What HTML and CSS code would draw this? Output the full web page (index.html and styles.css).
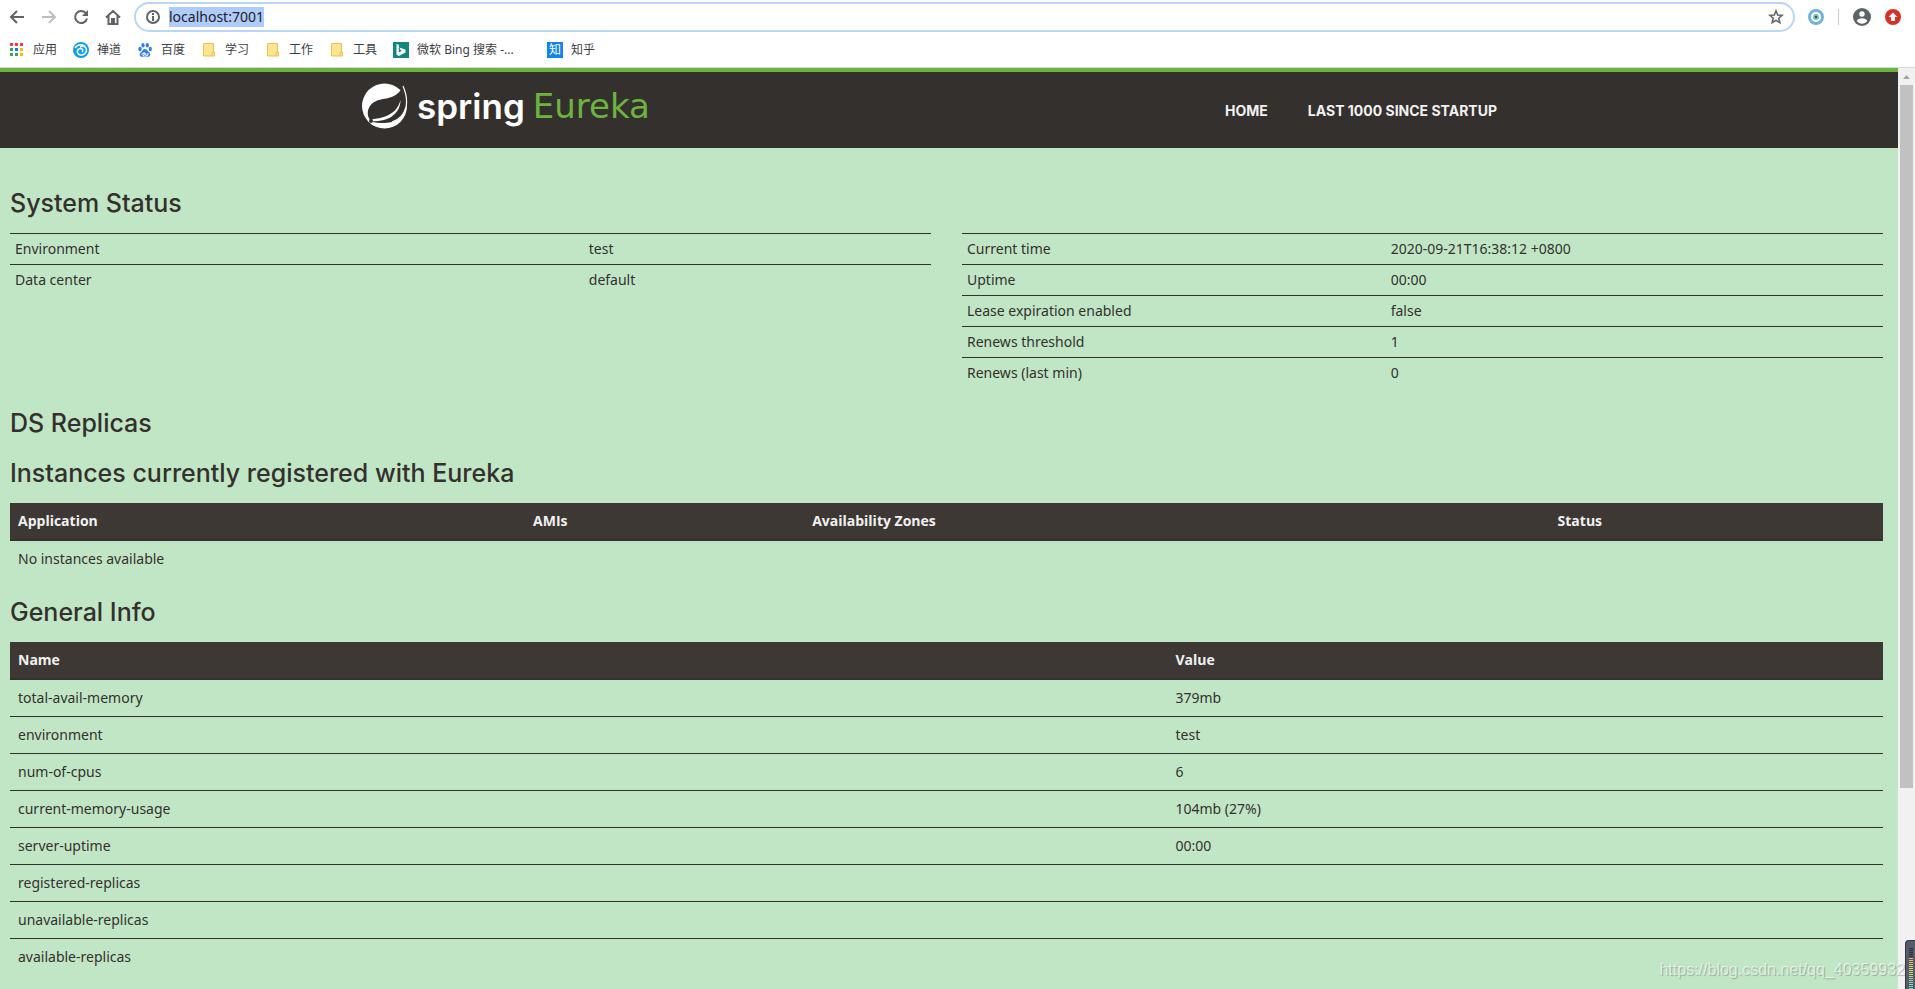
FILE: index.html
```html
<!DOCTYPE html>
<html lang="zh-CN">
<head>
<meta charset="utf-8">
<title>Eureka</title>
<link rel="stylesheet" href="styles.css">
</head>
<body>
<div class="toolbar">
  <div class="nav-buttons">
    <button class="icon-btn" aria-label="Back"><svg viewBox="0 0 16 16"><path d="M15 8H2M8 2L2 8l6 6" fill="none" stroke="#5f6368" stroke-width="2"/></svg></button>
    <button class="icon-btn" aria-label="Forward"><svg viewBox="0 0 16 16"><path d="M1 8h13M8 2l6 6-6 6" fill="none" stroke="#bdbfc1" stroke-width="2"/></svg></button>
    <button class="icon-btn" aria-label="Reload"><svg viewBox="0 0 16 16"><path d="M13 4.500A6 6 0 1 0 14 9.500" fill="none" stroke="#5f6368" stroke-width="2"/><path d="M15 1v6H9z" fill="#5f6368"/></svg></button>
    <button class="icon-btn" aria-label="Home"><svg viewBox="0 0 16 16"><path d="M1 8.500L8 2l7 6.500M3.500 7v8h3.500v-5h2v5h3.500V7" fill="none" stroke="#5f6368" stroke-width="2"/></svg></button>
  </div>
  <div class="omnibox">
    <svg class="info" viewBox="0 0 16 16"><circle cx="8" cy="8" r="6" fill="none" stroke="#5f6368" stroke-width="2"/><path d="M8 7v5M8 4v2" stroke="#5f6368" stroke-width="2"/></svg>
    <input class="url" type="text" aria-label="Address" value="localhost:7001">
    <button class="icon-btn star" aria-label="Bookmark"><svg viewBox="0 0 16 16"><path d="M8 1.800l1.700 4.200 4.500.3-3.500 2.900 1.200 4.500L8 11.300l-3.900 2.400 1.200-4.500L1.800 6.300l4.500-.3z" fill="none" stroke="#5f6368" stroke-width="1.500"/></svg></button>
  </div>
  <div class="extensions">
    <button class="icon-btn" aria-label="Extension"><svg viewBox="0 0 16 16"><circle cx="8" cy="8" r="6.500" fill="#fff" stroke="#72b3d6" stroke-width="3"/><circle cx="8" cy="8" r="3" fill="#71c3b1"/><circle cx="8" cy="8" r="1.200" fill="#35506b"/></svg></button>
    <span class="divider"></span>
    <button class="icon-btn avatar" aria-label="Profile"><svg viewBox="0 0 18 18"><circle cx="9" cy="9" r="9" fill="#5f6368"/><circle cx="9" cy="6" r="2.700" fill="#fff"/><path d="M3.800 13c1-3.600 9.400-3.600 10.400 0-2.500 3.500-7.900 3.500-10.400 0z" fill="#fff"/></svg></button>
    <button class="icon-btn" aria-label="Update"><svg viewBox="0 0 16 16"><circle cx="8" cy="8" r="8" fill="#d93025"/><path d="M8 3.500l4.300 4.500H10v4H6V8H3.700z" fill="#fff"/></svg></button>
  </div>
</div>
<nav class="bookmarks">
  <a href="#"><svg viewBox="0 0 16 16"><path d="M1 1h3v3H1zM6 1h3v3H6zM11 1h3v3h-3z" fill="#ea4335"/><path d="M1 6h3v3H1zM1 11h3v3H1zM6 11h3v3H6z" fill="#34a853"/><path d="M6 6h3v3H6z" fill="#1a73e8"/><path d="M11 6h3v3h-3zM11 11h3v3h-3z" fill="#fbbc04"/></svg>应用</a>
  <a href="#"><svg viewBox="0 0 16 16"><circle cx="8" cy="8" r="8" fill="#0a9bf2"/><path d="M2 6c3-4.500 9-4 11 0 2 4.500-3 8.500-7 6.500-3-2-1.500-6 1.500-6 2.500 0 3.200 2.600 1.300 3.500M13 6c-2-2-4-2-6-1" fill="none" stroke="#fff" stroke-width="1.500"/></svg>禅道</a>
  <a href="#"><svg viewBox="0 0 16 16"><g fill="#2f7cf0"><ellipse cx="3" cy="7" rx="1.700" ry="2.200"/><ellipse cx="6" cy="3.300" rx="1.600" ry="2.300"/><ellipse cx="10.300" cy="3.300" rx="1.600" ry="2.300"/><ellipse cx="13.300" cy="7" rx="1.600" ry="2.200"/><path d="M8 7c2 0 2.500 2 4.300 3.500 2 2 .7 4.500-1.800 4.300-1.700-.3-3.300-.3-5 0-2.500.2-3.800-2.300-1.800-4.300C5.500 9 6 7 8 7z"/></g><path d="M7.200 10v3.300H5.500c-1-.5-.7-2 .3-2h1.400M8.700 11v2.300h2.200V11" fill="none" stroke="#fff"/></svg>百度</a>
  <a href="#"><svg viewBox="0 0 16 16"><path d="M2.500 1.500h10v9h1v3.500h-11z" fill="#ffe48f" stroke="#e8c24d"/><path d="M11 14v-3.500h2.500" fill="none" stroke="#e8c24d"/></svg>学习</a>
  <a href="#"><svg viewBox="0 0 16 16"><path d="M2.500 1.500h10v9h1v3.500h-11z" fill="#ffe48f" stroke="#e8c24d"/><path d="M11 14v-3.500h2.500" fill="none" stroke="#e8c24d"/></svg>工作</a>
  <a href="#"><svg viewBox="0 0 16 16"><path d="M2.500 1.500h10v9h1v3.500h-11z" fill="#ffe48f" stroke="#e8c24d"/><path d="M11 14v-3.500h2.500" fill="none" stroke="#e8c24d"/></svg>工具</a>
  <a class="wide" href="#"><svg viewBox="0 0 16 16"><path d="M0 0h16v16H0z" fill="#11867f"/><path d="M3.500 2l2.300.8v7.700L9 8.700 7.500 8l-1-2.400L12.500 7.700v2.700L5.800 14l-2.300-1.300z" fill="#fff"/></svg>微软 Bing 搜索 -...</a>
  <a href="#"><span class="zhihu">知</span>知乎</a>
</nav>
<div class="viewport">
  <div class="page">
    <header class="navbar">
      <div class="navbar-inner">
        <a class="brand" href="#">
          <svg viewBox="0 0 46 46"><circle cx="22.500" cy="23" r="22.500" fill="#fff"/><path d="M41 3c3 7 4.500 14 3 21-2 8-7 13-14 15-7 1.500-14 1-20 0-5-4-5.500-11-2-16 3-4 7-6 13-7 9-1 16-4 20-13z" fill="#34302d"/><path d="M38.500 17c-2 8-7 13-14 16-5 2-10 2.500-15 3.500v2c9-.5 17-1.500 22-6.500 5-4 7-9.500 7-15z" fill="#fff"/><path d="M41 3c3 7 4.500 14 3 21-2 8-7 13-14 15" fill="none" stroke="#fff" stroke-width="1.200"/><circle cx="9" cy="38" r="2" fill="#34302d"/></svg>
          <span class="spring">spring</span><span class="eureka">Eureka</span>
        </a>
        <nav class="menu"><a href="#">HOME</a><a href="#">LAST 1000 SINCE STARTUP</a></nav>
      </div>
    </header>
    <main class="content">
      <h1>System Status</h1>
      <div class="status">
        <table class="compact env">
          <tr><td>Environment</td><td>test</td></tr>
          <tr><td>Data center</td><td>default</td></tr>
        </table>
        <table class="compact runtime">
          <tr><td>Current time</td><td>2020-09-21T16:38:12 +0800</td></tr>
          <tr><td>Uptime</td><td>00:00</td></tr>
          <tr><td>Lease expiration enabled</td><td>false</td></tr>
          <tr><td>Renews threshold</td><td>1</td></tr>
          <tr><td>Renews (last min)</td><td>0</td></tr>
        </table>
      </div>
      <h1>DS Replicas</h1>
      <h1>Instances currently registered with Eureka</h1>
      <table class="striped instances">
        <thead><tr><th>Application</th><th>AMIs</th><th>Availability Zones</th><th>Status</th></tr></thead>
        <tbody><tr><td colspan="4">No instances available</td></tr></tbody>
      </table>
      <h1>General Info</h1>
      <table class="striped general">
        <thead><tr><th>Name</th><th>Value</th></tr></thead>
        <tbody>
          <tr><td>total-avail-memory</td><td>379mb</td></tr>
          <tr><td>environment</td><td>test</td></tr>
          <tr><td>num-of-cpus</td><td>6</td></tr>
          <tr><td>current-memory-usage</td><td>104mb (27%)</td></tr>
          <tr><td>server-uptime</td><td>00:00</td></tr>
          <tr><td>registered-replicas</td><td></td></tr>
          <tr><td>unavailable-replicas</td><td></td></tr>
          <tr><td>available-replicas</td><td></td></tr>
        </tbody>
      </table>
    </main>
  </div>
  <div class="scrollbar">
    <svg viewBox="0 0 17 17"><path d="M5 11l3.500-4L12 11z" fill="#a3a3a3"/></svg>
    <div class="thumb"></div>
  </div>
  <div class="watermark">https://blog.csdn.net/qq_40359932</div>
  <div class="meter"><div class="bars"></div></div>
</div>
</body>
</html>
```
FILE: styles.css
```css
* { box-sizing: border-box; }
body {
  margin: 0;
  height: 100vh;
  display: flex;
  flex-direction: column;
  overflow: hidden;
  background: #fff;
  font-family: "Noto Sans", "Noto Sans CJK SC", sans-serif;
  font-size: 14px;
  line-height: 20px;
  color: #34302d;
}
a { color: inherit; text-decoration: none; }
svg { display: block; flex: none; }

/* Browser chrome */
.toolbar { display: flex; align-items: center; padding: 2px 14px 0 9px; }
.nav-buttons { display: flex; gap: 16px; margin-right: 13px; }
.icon-btn { display: block; width: 16px; height: 16px; padding: 0; border: 0; background: none; }
.icon-btn svg { width: 100%; height: 100%; }
.omnibox {
  flex: 1;
  display: flex;
  align-items: center;
  height: 30px;
  padding: 0 9px;
  border: 2px solid #b9d5f8;
  border-radius: 15px;
}
.info { width: 16px; height: 16px; margin-right: 8px; }
.url {
  field-sizing: content;
  height: 20px;
  padding: 0;
  border: 0;
  outline: 0;
  background: #aecbfa;
  font: 14px/20px "Noto Sans", sans-serif;
  color: #202124;
}
.star { margin-left: auto; }
.extensions { display: flex; align-items: center; gap: 14px; margin-left: 13px; }
.divider { width: 1px; height: 16px; background: #c8cacd; }
.icon-btn.avatar { width: 18px; height: 18px; }
.bookmarks {
  display: flex;
  gap: 16px;
  height: 36px;
  padding: 0 9px;
  border-bottom: 1px solid #d8dadd;
  font-size: 12px;
  color: #3c4043;
}
.bookmarks a { display: flex; align-items: center; gap: 8px; white-space: nowrap; }
.bookmarks svg { width: 16px; height: 16px; }
.bookmarks .wide { width: 138px; }
.zhihu { width: 16px; height: 16px; background: #1283ea; color: #fff; line-height: 16px; text-align: center; }

/* Page area */
.viewport { position: relative; flex: 1; min-height: 0; display: flex; }
.page { flex: 1; overflow: hidden; background: #c1e6c6; }
.navbar { height: 80px; border-top: 4px solid #6db33f; background: #34302d; }
.navbar-inner {
  display: flex;
  justify-content: space-between;
  max-width: 1174px;
  height: 68px;
  margin: 0 auto;
}
.brand { display: flex; align-items: center; font-family: Inter, sans-serif; font-size: 35px; line-height: 40px; }
.brand svg { width: 46px; height: 46px; margin-right: 9px; }
.spring { margin-right: 8px; color: #fff; font-weight: 600; }
.eureka { color: #6db33f; font-family: "DejaVu Sans", sans-serif; font-size: 34px; }
.menu { display: flex; gap: 40px; align-items: center; padding: 9px 39px 0 0; font-family: Inter, sans-serif; font-weight: 700; color: #f1f1f1; }
.content { padding: 42px 15px 0 10px; }
h1 { margin: 22px 0 17px; font: 500 25px/26px Inter, sans-serif; }
h1:first-child { margin-top: 0; }
h1 + h1 { margin-top: 24px; }
table { width: 100%; table-layout: fixed; border-collapse: separate; border-spacing: 0; }
.status { display: grid; grid-template-columns: 1fr 1fr; gap: 31px; align-items: start; }
.compact td { height: 31px; padding: 5px; border-top: 1px solid #34302d; }
.env td:first-child { width: 62.3%; }
.runtime td:first-child { width: 46%; }
.striped th { height: 38px; padding: 8px; border-bottom: 2px solid #34302d; background: #3d3833; color: #f1f1f1; text-align: left; font-family: "Open Sans", sans-serif; font-weight: 700; }
.striped td { padding: 8px; }
.striped tr + tr td { border-top: 1px solid #34302d; }
.instances th:nth-child(1) { width: 27.5%; }
.instances th:nth-child(2) { width: 14.9%; }
.instances th:nth-child(3) { width: 39.8%; }
.general th:first-child { width: 61.8%; }

/* Scrollbar and overlays */
.scrollbar { width: 17px; background: #f1f1f1; }
.thumb { height: 76.3%; margin: 0 2px; background: #c1c1c1; }
.watermark {
  position: absolute;
  right: 10px;
  bottom: 9px;
  font: 16px/20px "Liberation Sans", Arial, sans-serif;
  color: rgba(255, 255, 255, 0.65);
  text-shadow: 1px 1px 1px rgba(0, 0, 0, 0.25);
}
.meter {
  position: absolute;
  right: 0;
  bottom: 0;
  width: 10px;
  height: 49px;
  padding: 7px 2px 0 3px;
  border: solid #34373f;
  border-width: 1px 0 0 1px;
  border-radius: 4px 0 0 0;
  background: #555b6b;
}
.bars {
  height: 41px;
  background:
    repeating-linear-gradient(transparent 0 1px, #4d5361 1px 2px),
    linear-gradient(#30333a 0 10px, #f5a95c 10px, #e8e070 20px, #b0e090 30px, #6fdcc8 41px);
}
```
